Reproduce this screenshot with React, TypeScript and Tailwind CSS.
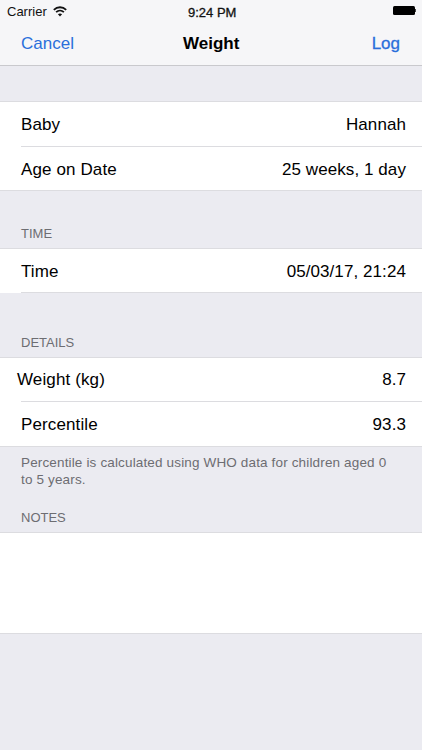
const font = { fontFamily: '"Liberation Sans", Arial, sans-serif' }

function Row({ label, value, rowClass, labelClass }: { label: string; value: string; rowClass: string; labelClass?: string }) {
  return (
    <div className="pl-[21px]">
      <div className={`flex items-center justify-between pr-[16px] ${rowClass}`}>
        <span className={`text-[17px] tracking-[0.12px] text-black ${labelClass ?? ''}`}>{label}</span>
        <span className="text-[17px] tracking-[0.08px] text-black">{value}</span>
      </div>
    </div>
  )
}

function Wifi() {
  return (
    <svg width="14" height="11" viewBox="0 0 14 11" fill="none" stroke="#111" strokeWidth="1.8">
      <path d="M.8 3.8C4.4.4 9.6.4 13.2 3.8" />
      <path d="M3.1 6.2C5.4 4 8.6 4 10.9 6.2" />
      <path d="M7 10.6 4.9 8.2C6.1 7.1 7.9 7.1 9.1 8.2Z" fill="#111" stroke="none" />
    </svg>
  )
}

function SectionLabel({ text, height }: { text: string; height: string }) {
  return <div className={`flex items-end pb-[5px] pl-[21px] text-[13px] uppercase text-[#6d6d72] ${height}`}>{text}</div>
}

export default function App() {
  return (
    <div style={font} className="flex h-[750px] w-[422px] flex-col overflow-hidden bg-[#ebebf1]">
      <div className="h-[66px] border-b border-[#c9c9cd] bg-[#f6f6f8]">
        <div className="relative flex h-[22px] items-center justify-between pl-[7px] pr-[6px] text-[13px] text-[#111]">
          <div className="flex items-center gap-[6px]">
            <span className="pt-[1px]">Carrier</span>
            <Wifi />
          </div>
          <span className="absolute left-[188px] top-[3px] [-webkit-text-stroke:0.3px_#111]">9:24 PM</span>
          <div className="flex items-center pb-[1px]">
            <div className="h-[9px] w-[22px] rounded-[1.5px] bg-black" />
            <div className="h-[3px] w-[1.5px] bg-[#444]" />
          </div>
        </div>
        <div className="relative flex h-[43px] items-center justify-between pl-[21px] pr-[22px] pt-[1px] text-[17px]">
          <span className="text-[#2a6fdb]">Cancel</span>
          <span className="absolute left-[183px] font-bold text-black">Weight</span>
          <span className="text-[#2a6fdb] [-webkit-text-stroke:0.3px_#2a6fdb]">Log</span>
        </div>
      </div>

      <div className="mt-[35px] border-y border-[#dcdce0] bg-white">
        <Row label="Baby" value="Hannah" rowClass="h-[45px] border-b border-[#dcdce0] pt-[1px]" />
        <Row label="Age on Date" value="25 weeks, 1 day" rowClass="h-[43px] pt-[2px]" />
      </div>

      <SectionLabel text="Time" height="h-[57px]" />
      <div className="border-t border-[#dcdce0] bg-white">
        <Row label="Time" value="05/03/17, 21:24" rowClass="h-[44px] border-b border-[#dcdce0] pt-[2px]" />
      </div>

      <SectionLabel text="Details" height="h-[64px]" />
      <div className="border-y border-[#dcdce0] bg-white">
        <Row label="Weight (kg)" value="8.7" labelClass="-ml-[4px]" rowClass="h-[44px] border-b border-[#dcdce0]" />
        <Row label="Percentile" value="93.3" rowClass="h-[44px] pt-[1px]" />
      </div>

      <p className="pl-[21px] pr-[30px] pt-[7px] text-[13.5px] leading-[17px] tracking-[0.15px] text-[#6d6d72]">
        Percentile is calculated using WHO data for children aged 0 to 5 years.
      </p>
      <SectionLabel text="Notes" height="h-[44px]" />
      <div className="h-[102px] border-y border-[#dcdce0] bg-white" />
    </div>
  )
}
